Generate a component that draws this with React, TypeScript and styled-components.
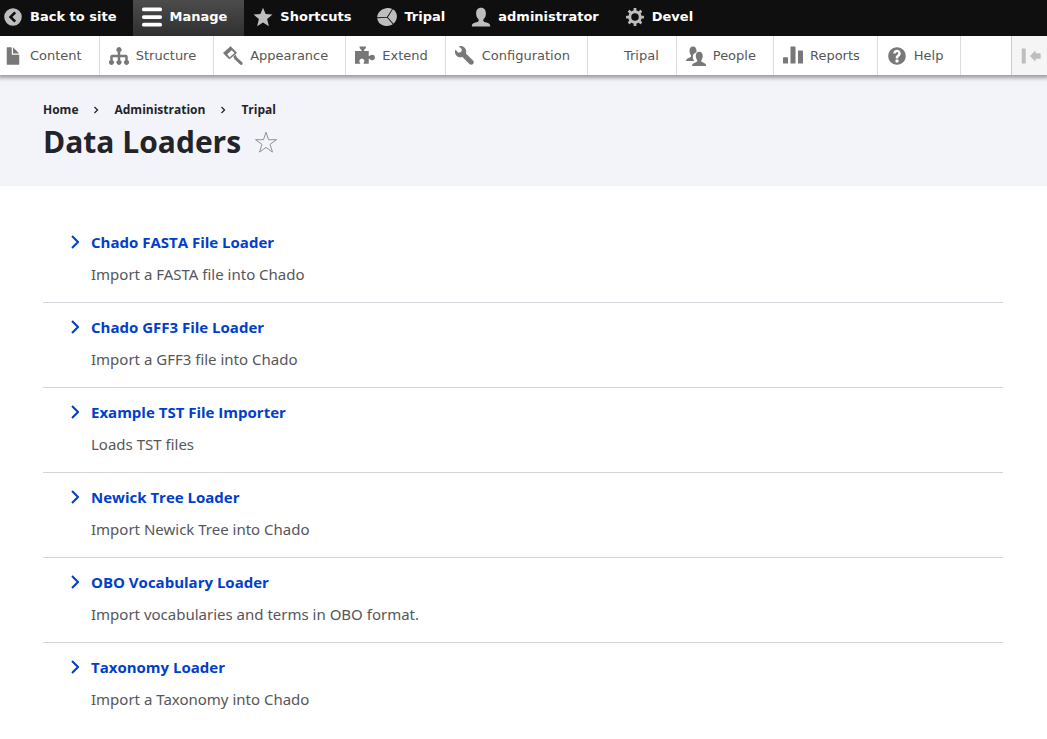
import React from 'react';
import styled, { createGlobalStyle } from 'styled-components';

const GlobalStyle = createGlobalStyle`
  *, *::before, *::after { box-sizing: border-box; }
  body {
    margin: 0;
    background: #fff;
    color: #232429;
    font-family: 'Open Sans', 'Noto Sans', sans-serif;
  }
  a { text-decoration: none; }
`;

const Toolbar = styled.nav`
  position: relative;
  font-family: 'DejaVu Sans', sans-serif;
  font-size: 13px;
  line-height: 16px;
  white-space: nowrap;
  box-shadow: 0 1px 4px 2px rgba(0, 0, 0, 0.36);
`;

const Bar = styled.div`
  display: flex;
  height: 36px;
  background: #0f0f0f;
  overflow: hidden;
`;

const Tray = styled.div`
  display: flex;
  justify-content: space-between;
  height: 39px;
  background: #fff;
  overflow: hidden;
`;

const Menu = styled.ul`
  display: flex;
  list-style: none;
  margin: 0 0 0 -6px;
  padding: 0;
`;

const BarLink = styled.a<{ $active?: boolean }>`
  display: flex;
  align-items: center;
  gap: 7px;
  height: 100%;
  padding: 0 17px 3px 9px;
  color: #fff;
  font-weight: 700;
  background: ${(p) => (p.$active ? 'linear-gradient(#4c4c4c, #303030)' : 'none')};
  svg { color: ${(p) => (p.$active ? '#fff' : '#bebebe')}; }
`;

const TrayLink = styled.a`
  display: flex;
  align-items: center;
  gap: 7px;
  height: 100%;
  padding: 0 17px 0 9px;
  color: #565656;
  border-right: 1px solid #ddd;
  svg { color: #787878; }
`;

const Glyph = styled.svg`
  flex: none;
  width: 20px;
  height: 20px;
  fill: currentColor;
`;

const OrientationButton = styled.button`
  display: flex;
  align-items: center;
  width: 36px;
  padding: 0 0 0 9px;
  border: 0;
  border-left: 1px solid #c9c9c9;
  background: #f5f5f5;
  color: #bebebe;
`;

const Header = styled.header`
  height: 111px;
  padding: 25px 44px 0 43px;
  background: #f3f4f9;
`;

const Breadcrumb = styled.ol`
  display: flex;
  align-items: center;
  list-style: none;
  margin: 0;
  padding: 0;
  font-size: 12px;
  line-height: 20px;
  font-weight: 700;
  li { display: flex; align-items: center; }
  a { color: #232429; }
  svg { margin: 0 15px; }
`;

const TitleRow = styled.div`
  display: flex;
  align-items: center;
  gap: 13px;
`;

const Title = styled.h1`
  margin: 0;
  font-size: 30px;
  line-height: 44px;
  font-weight: 700;
`;

const StarButton = styled.button`
  display: flex;
  padding: 0;
  border: 0;
  background: none;
`;

const Main = styled.main`
  padding: 32px 44px 24px 43px;
`;

const LoaderList = styled.dl`
  margin: 0;
`;

const LoaderItem = styled.div`
  height: 85px;
  padding: 12px 24px 0 28px;
  border-bottom: 1px solid #d3d4d9;
  &:last-child { border-bottom: 0; }
`;

const LoaderName = styled.dt`
  font-size: 15px;
  line-height: 24px;
  font-weight: 700;
  a {
    display: flex;
    align-items: center;
    gap: 12px;
    color: #003ecc;
  }
`;

const LoaderText = styled.dd`
  margin: 8px 0 0 20px;
  font-family: 'Noto Sans', 'Open Sans', sans-serif;
  font-size: 15px;
  line-height: 24px;
  color: #55565b;
`;

const icons: Record<string, React.ReactNode> = {
  back: (
    <path fillRule="evenodd" d="M8 1a7 7 0 1 0 0 14A7 7 0 0 0 8 1zM9 3.600l1.500 1.400-3 3 3 3L9 12.400 4.600 8z" />
  ),
  manage: (
    <>
      <rect y="0.4" width="16" height="3" rx="1.3" />
      <rect y="6.5" width="16" height="3" rx="1.3" />
      <rect y="12.6" width="16" height="3" rx="1.3" />
    </>
  ),
  star: <path d="M8 .6l2.100 5 5.500.4-4.300 3.600 1.400 5.700L8 12.300l-4.700 3 1.400-5.700L.4 6l5.500-.4z" />,
  pie: (
    <>
      <path d="M7.900 7.900L.1 8.200C.4 4.500 3.400 1.600 7.200 1c1.700-.3 3.500-.2 4.900.5z" />
      <path d="M8.700 8.100l4-6.300c2 1.100 3.200 3.200 3.200 5.600 0 2.200-.9 4.400-2.700 5.900z" />
      <path d="M8.100 8.600l4.500 5.200c-1.500 1-3.400 1.500-5.400 1.300C3.500 14.800.6 12.600.2 8.900z" />
    </>
  ),
  person: (
    <path d="M.7 15.500v-1c.3-1.300 2-1.900 3.600-2.300 1.300-.4 1.900-.8 1.900-1.500 0-.6-.4-1-.9-1.700C4.500 8 4.100 6.700 4.100 4.900 4.100 2.200 5.600.5 8 .5s3.900 1.700 3.900 4.400c0 1.800-.4 3.100-1.200 4.100-.5.700-.9 1.100-.9 1.700 0 .7.600 1.100 1.900 1.500 1.600.4 3.300 1 3.600 2.300v1z" />
  ),
  cog: (
    <>
      <circle cx="8" cy="8" r="4.200" fill="none" stroke="currentColor" strokeWidth="2.400" />
      {[0, 45, 90, 135, 180, 225, 270, 315].map((a) => (
        <rect key={a} x="6.900" y="0.800" width="2.200" height="3" rx="0.400" transform={`rotate(${a} 8 8)`} />
      ))}
    </>
  ),
  file: (
    <>
      <path d="M12.500 7h-5A.5.500 0 0 1 7 6.500v-5a.5.500 0 0 0-.5-.5h-3a.5.500 0 0 0-.5.500v13c0 .3.200.5.500.5h9c.3 0 .5-.2.500-.5v-7c0-.3-.2-.5-.5-.5z" />
      <path d="M8.500 6h4c.3 0 .3-.2.100-.4L8.400 1.400c-.2-.2-.4-.1-.4.100v4c0 .3.200.5.500.5z" />
    </>
  ),
  structure: (
    <path d="M15 11.300V8.500C15 7.700 14.300 7 13.500 7H9V4.700A2 2 0 1 0 7 4.700V7H2.500C1.700 7 1 7.700 1 8.500v2.800a2 2 0 1 0 2 0V9h4v2.300a2 2 0 1 0 2 0V9h4v2.300a2 2 0 1 0 2 0z" />
  ),
  appearance: (
    <>
      <path fillRule="evenodd" d="M5.600.5L.4 5.100c-.3.300-.3.500-.1.800l4.300 4.300c.2.300.6.300.9.100l5.300-4.600c.3-.2.300-.6.100-.8L6.400.5c-.2-.3-.5-.3-.8 0zM5.300 8.900L3.400 6.500 6.900 3.300l2.300 2.300z" />
      <path d="M8.200 8.600l1.900-1.900.9 2.300 4.300 4c.5.500.6 1.300.1 1.800-.4.500-1.200.5-1.700 0L9.300 10.500z" />
    </>
  ),
  extend: (
    <path d="M0 4h4.800c.5 0 .7-.3.400-.7C4.700 2.800 4.100 2 3.700 1.500V.3h5v1.200L7.400 3c-.3.500-.2 1 .4 1H11v3.500c0 .5.400.7.900.3.5-.5 1-.8 1.800-.8 1.300 0 2.300.9 2.300 2.100s-1 2.200-2.300 2.200c-.8 0-1.300-.4-1.800-.8s-.9-.2-.9.300v3.400H7.300c-.5 0-.6-.4-.3-.8 1-1.300.5-3.300-1.500-3.300s-2.500 2-1.500 3.300c.3.400.2.800-.3.800H0z" />
  ),
  wrench: (
    <path d="M14.416 11.586L8.750 5.921c.15-.449.252-.921.252-1.421C9.002 2.015 6.986 0 4.500 0c-.505 0-.981.102-1.434.255l2.431 2.431-.588 2.196-2.196.588L.268 3.025C.106 3.489 0 3.981 0 4.500 0 6.986 2.014 9 4.500 9c.5 0 .972-.102 1.421-.251l5.667 5.665c.781.781 2.047.781 2.828 0s.781-2.047 0-2.828z" />
  ),
  people: (
    <>
      <path d="M6.600 11.900c-.2-.3-.5-.7-.7-1.100-.5-1-.6-2.200-.2-3.500.4-1.200 1.300-2 2.700-2.200.3-2.600-.6-4.800-2.800-4.800C3.700.3 2.800 1.700 2.800 3.700c0 1.300.3 2.200.8 3 .6.800.7 1.600-.2 2.200C2.300 9.600.1 9.900 0 11.900z" />
      <path d="M4.900 16v-.8c.2-1.500 2.400-1.700 3.500-2.400.9-.5.800-1.300.2-2-.5-.8-.8-1.700-.8-2.800 0-2 1-3.400 2.800-3.400S13.400 6 13.400 8c0 1.100-.3 2-.8 2.800-.6.700-.7 1.500.2 2 1.100.7 3 .9 3.200 2.400v.8z" />
    </>
  ),
  reports: (
    <>
      <rect x="0" y="9" width="4" height="5" rx="0.500" />
      <rect x="6" y="0.300" width="4" height="13.700" rx="0.500" />
      <rect x="12" y="3.500" width="4" height="10.500" rx="0.500" />
    </>
  ),
  help: (
    <path d="M8.002 1c-3.868 0-7.002 3.134-7.002 7s3.134 7 7.002 7c3.865 0 7-3.134 7-7s-3.135-7-7-7zm3 5c0 .551-.16 1.085-.477 1.586l-.158.22c-.07.093-.189.241-.361.393-.168.148-.35.299-.545.447l-.203.189-.141.129-.096.17-.021.235v.63h-2.001v-.704c.026-.396.078-.73.204-.999.125-.269.271-.498.439-.688l.225-.21-.01-.015.176-.14.137-.128c.186-.139.357-.277.516-.417l.148-.18c.098-.152.168-.323.168-.518 0-.552-.447-1-1-1s-1.002.448-1.002 1h-2c0-1.657 1.343-3 3.002-3 1.656 0 3 1.343 3 3zm-1.750 6.619c0 .344-.281.625-.625.625h-1.250c-.345 0-.626-.281-.626-.625v-1.238c0-.344.281-.625.626-.625h1.250c.344 0 .625.281.625.625v1.238z" />
  ),
  collapse: (
    <>
      <rect x="0.600" y="2" width="3.200" height="12" rx="0.400" />
      <path d="M7.200 8l3.900-4.100c.3-.3.600-.2.600.2v1.700H15c.5 0 .8.300.8.700v3c0 .4-.3.700-.8.700h-3.300v1.700c0 .4-.3.500-.6.200z" />
    </>
  ),
};

const Icon = ({ name }: { name: string }) => (
  <Glyph viewBox="0 0 16 16" aria-hidden="true">{icons[name]}</Glyph>
);

const barItems = [
  { label: 'Back to site', icon: 'back' },
  { label: 'Manage', icon: 'manage', active: true },
  { label: 'Shortcuts', icon: 'star' },
  { label: 'Tripal', icon: 'pie' },
  { label: 'administrator', icon: 'person' },
  { label: 'Devel', icon: 'cog' },
];

const trayItems = [
  { label: 'Content', icon: 'file' },
  { label: 'Structure', icon: 'structure' },
  { label: 'Appearance', icon: 'appearance' },
  { label: 'Extend', icon: 'extend' },
  { label: 'Configuration', icon: 'wrench' },
  { label: 'Tripal', icon: 'none' },
  { label: 'People', icon: 'people' },
  { label: 'Reports', icon: 'reports' },
  { label: 'Help', icon: 'help' },
];

const crumbs = ['Home', 'Administration', 'Tripal'];

const loaders = [
  ['Chado FASTA File Loader', 'Import a FASTA file into Chado'],
  ['Chado GFF3 File Loader', 'Import a GFF3 file into Chado'],
  ['Example TST File Importer', 'Loads TST files'],
  ['Newick Tree Loader', 'Import Newick Tree into Chado'],
  ['OBO Vocabulary Loader', 'Import vocabularies and terms in OBO format.'],
  ['Taxonomy Loader', 'Import a Taxonomy into Chado'],
];

export default function App() {
  return (
    <>
      <GlobalStyle />
      <Toolbar aria-label="Administration">
        <Bar>
          <Menu>
            {barItems.map((item) => (
              <li key={item.label}>
                <BarLink href="#" $active={item.active}>
                  <Icon name={item.icon} />
                  {item.label}
                </BarLink>
              </li>
            ))}
          </Menu>
        </Bar>
        <Tray>
          <Menu>
            {trayItems.map((item) => (
              <li key={item.label}>
                <TrayLink href="#">
                  <Icon name={item.icon} />
                  {item.label}
                </TrayLink>
              </li>
            ))}
          </Menu>
          <OrientationButton type="button" aria-label="Vertical orientation">
            <Icon name="collapse" />
          </OrientationButton>
        </Tray>
      </Toolbar>
      <Header>
        <nav aria-label="Breadcrumb">
          <Breadcrumb>
            {crumbs.map((crumb, i) => (
              <li key={crumb}>
                {i > 0 && (
                  <svg width="6" height="8" viewBox="0 0 6 8" fill="none" stroke="#232429" strokeWidth="1.300" aria-hidden="true">
                    <path d="M1.500 1l3 3-3 3" />
                  </svg>
                )}
                <a href="#">{crumb}</a>
              </li>
            ))}
          </Breadcrumb>
        </nav>
        <TitleRow>
          <Title>Data Loaders</Title>
          <StarButton type="button" aria-label="Add to shortcuts">
            <svg width="24" height="24" viewBox="0 0 24 24" fill="none" stroke="#919297" strokeWidth="1">
              <path d="M12 2.200l2.500 7.500h8l-6.500 4.700 2.500 7.700L12 17.400l-6.500 4.700L8 14.400 1.500 9.700h8z" />
            </svg>
          </StarButton>
        </TitleRow>
      </Header>
      <Main>
        <LoaderList>
          {loaders.map(([name, text]) => (
            <LoaderItem key={name}>
              <LoaderName>
                <a href="#">
                  <svg width="8" height="14" viewBox="0 0 8 14" fill="none" stroke="#003ecc" strokeWidth="2" aria-hidden="true">
                    <path d="M1 1l6 6-6 6" />
                  </svg>
                  {name}
                </a>
              </LoaderName>
              <LoaderText>{text}</LoaderText>
            </LoaderItem>
          ))}
        </LoaderList>
      </Main>
    </>
  );
}
